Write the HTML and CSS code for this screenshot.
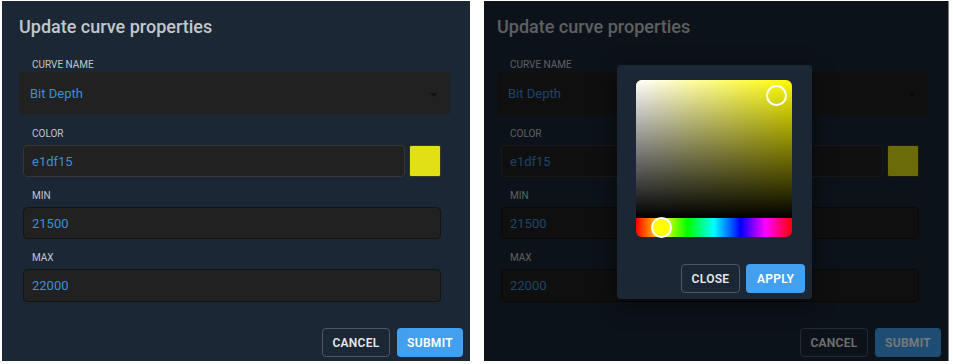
FILE: index.html
```html
<!DOCTYPE html>
<html>
<head>
    <title>Update curve properties</title>
    <link rel="stylesheet" href="styles.css">
</head>
<body>
    <div class="shots">
        <!-- plain dialog -->
        <div class="screen">
            <div class="dialog">
                <h2 class="dialog-title">Update curve properties</h2>
                <div class="field-label first">Curve name</div>
                <div class="select">
                    <span>Bit Depth</span>
                    <span class="select-arrow"></span>
                </div>
                <div class="field-label">Color</div>
                <div class="color-row">
                    <div class="input color-input">e1df15</div>
                    <div class="swatch"></div>
                </div>
                <div class="field-label">Min</div>
                <div class="input number-input">21500</div>
                <div class="field-label">Max</div>
                <div class="input number-input tall">22000</div>
                <div class="actions">
                    <button class="btn btn-outline">Cancel</button>
                    <button class="btn btn-primary">Submit</button>
                </div>
            </div>
        </div>

        <!-- same dialog with the color picker open -->
        <div class="screen screen-right">
            <div class="dialog">
                <h2 class="dialog-title">Update curve properties</h2>
                <div class="field-label first">Curve name</div>
                <div class="select">
                    <span>Bit Depth</span>
                    <span class="select-arrow"></span>
                </div>
                <div class="field-label">Color</div>
                <div class="color-row">
                    <div class="input color-input">e1df15</div>
                    <div class="swatch"></div>
                </div>
                <div class="field-label">Min</div>
                <div class="input number-input">21500</div>
                <div class="field-label">Max</div>
                <div class="input number-input tall">22000</div>
                <div class="actions">
                    <button class="btn btn-outline">Cancel</button>
                    <button class="btn btn-primary">Submit</button>
                </div>
            </div>
            <div class="backdrop"></div>
            <div class="picker">
                <div class="saturation">
                    <div class="sat-white"></div>
                    <div class="sat-black"></div>
                    <div class="sat-cursor"></div>
                </div>
                <div class="hue">
                    <div class="hue-cursor"></div>
                </div>
                <div class="picker-actions">
                    <button class="btn btn-outline">Close</button>
                    <button class="btn btn-primary">Apply</button>
                </div>
            </div>
        </div>
    </div>
</body>
</html>
```

FILE: styles.css
```css
body {
    margin: 0;
    padding: 1px 0 0 2px;
    background-color: #ffffff;
    font-family: Roboto, "Noto Sans", Arial, sans-serif;
}
.shots {
    display: flex;
    gap: 14px;
}
.screen {
    position: relative;
    width: 468px;
    height: 360px;
    overflow: hidden;
}
.screen-right {
    width: 465px;
}
.screen-right .dialog {
    margin-left: -4px;
}
.dialog {
    width: 468px;
    height: 360px;
    box-sizing: border-box;
    padding-top: 15px;
    background-color: #1b2735;
}
.dialog-title {
    margin: 0 0 0 17px;
    font-size: 18px;
    line-height: 22px;
    font-weight: 500;
    color: #c3c7cc;
}
.field-label {
    margin: 13px 0 5px 30px;
    font-size: 10px;
    line-height: 12px;
    font-weight: 400;
    text-transform: uppercase;
    color: #c2c6cb;
}
.field-label.first {
    margin-top: 21px;
    margin-bottom: 1px;
}
.select {
    display: flex;
    align-items: center;
    justify-content: space-between;
    margin-left: 17px;
    width: 431px;
    height: 43px;
    box-sizing: border-box;
    padding: 0 12px 0 11px;
    background-color: #212121;
    border-radius: 4px;
    font-size: 13px;
    color: #3d8edb;
}
.select-arrow {
    width: 0;
    height: 0;
    border-left: 4px solid transparent;
    border-right: 4px solid transparent;
    border-top: 4px solid #121212;
    margin-top: 2px;
}
.color-row {
    display: flex;
    gap: 4px;
    margin-left: 21px;
}
.input {
    display: flex;
    align-items: center;
    height: 32px;
    box-sizing: border-box;
    padding-left: 8px;
    background-color: #212121;
    border: 1px solid #141414;
    border-radius: 4px;
    font-size: 13px;
    color: #3d8edb;
}
.color-input {
    width: 382px;
    border-color: #363636;
}
.number-input {
    width: 418px;
    margin-left: 21px;
}
.number-input.tall {
    height: 33px;
}
.swatch {
    width: 32px;
    height: 32px;
    box-sizing: border-box;
    background-color: #e1df15;
    border: 1px solid #3b3a12;
    border-radius: 2px;
}
.actions {
    display: flex;
    justify-content: flex-end;
    gap: 7px;
    margin: 26px 7px 0 0;
}
.btn {
    height: 29px;
    box-sizing: border-box;
    border-radius: 4px;
    font-family: Roboto, "Noto Sans", Arial, sans-serif;
    font-size: 12px;
    font-weight: 600;
    letter-spacing: 0.3px;
    text-transform: uppercase;
    cursor: pointer;
}
.btn-outline {
    width: 68px;
    background-color: transparent;
    border: 1px solid #4b5866;
    color: #e6e8ea;
}
.btn-primary {
    width: 66px;
    background-color: #42a0ef;
    border: none;
    color: #ffffff;
}
.backdrop {
    position: absolute;
    inset: 0;
    background-color: rgba(0, 0, 0, 0.52);
}
.picker {
    position: absolute;
    left: 133px;
    top: 64px;
    width: 195px;
    height: 234px;
    box-sizing: border-box;
    padding: 15px 20px 0 19px;
    background-color: #1b2735;
    border-radius: 3px;
    box-shadow: 0 6px 24px rgba(0, 0, 0, 0.45);
}
.saturation {
    position: relative;
    height: 138px;
    background-color: #fffb00;
    border-radius: 6px 6px 0 0;
    overflow: hidden;
}
.sat-white {
    position: absolute;
    inset: 0;
    background: linear-gradient(to right, #ffffff, rgba(255, 255, 255, 0));
}
.sat-black {
    position: absolute;
    inset: 0;
    background: linear-gradient(to bottom, rgba(0, 0, 0, 0), #000000);
}
.sat-cursor {
    position: absolute;
    left: 130px;
    top: 5px;
    width: 21px;
    height: 21px;
    box-sizing: border-box;
    border: 2px solid #ffffff;
    border-radius: 50%;
}
.hue {
    position: relative;
    height: 19px;
    border-radius: 0 0 6px 6px;
    background: linear-gradient(to right, #ff0000 0%, #ffff00 17%, #00ff00 33%, #00ffff 50%, #0000ff 67%, #ff00ff 83%, #ff0000 100%);
}
.hue-cursor {
    position: absolute;
    left: 15px;
    top: -1px;
    width: 21px;
    height: 21px;
    box-sizing: border-box;
    background-color: #ffff00;
    border: 2px solid #ffffff;
    border-radius: 50%;
}
.picker-actions {
    display: flex;
    justify-content: flex-end;
    gap: 6px;
    margin: 27px -13px 0 0;
}
.picker-actions .btn {
    width: 59px;
}
```
